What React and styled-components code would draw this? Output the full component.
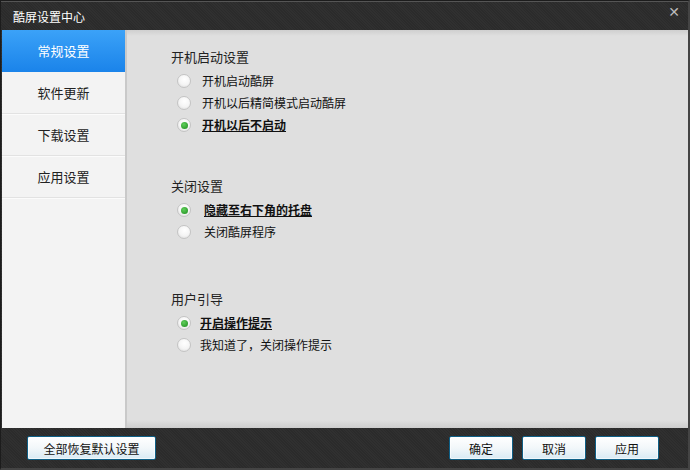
import React, { useState } from "react";
import styled, { createGlobalStyle } from "styled-components";

const Global = createGlobalStyle`
	html, body {
		margin: 0;
		padding: 0;
		background: #2a2a2a;
	}
	* {
		box-sizing: border-box;
	}
`;

const font = `"Noto Sans CJK SC", "Noto Sans", sans-serif`;

const Window = styled.div`
	width: 690px;
	height: 470px;
	display: flex;
	flex-direction: column;
	font-family: ${font};
	font-size: 12px;
	color: #222;
	background-color: #2b2b2b;
	background-image: repeating-linear-gradient(45deg, rgba(255, 255, 255, 0.025) 0 1px, transparent 1px 2px);
	border: 1px solid #1c1c1c;
	border-right: 2px solid #444;
	border-bottom: 2px solid #444;
`;

const TitleBar = styled.div`
	height: 29px;
	display: flex;
	align-items: center;
	justify-content: space-between;
	padding: 0 8px 0 12px;
	color: #fff;
	font-size: 12px;
	border-top: 1px solid #555;
`;

const Close = styled.span`
	color: #bbb;
	font-family: "DejaVu Sans", sans-serif;
	font-size: 14px;
	line-height: 1;
	margin-top: -8px;
`;

const Body = styled.div`
	flex: 1;
	display: flex;
	margin: 0 0 0 1px;
`;

const Sidebar = styled.div`
	width: 125px;
	background: #f3f3f3;
	border-right: 2px solid #c9c9c9;
	display: flex;
	flex-direction: column;
`;

const NavItem = styled.div`
	height: 42px;
	display: flex;
	align-items: center;
	justify-content: center;
	font-size: 13px;
	color: ${(p) => (p.$active ? "#fff" : "#222")};
	background: ${(p) => (p.$active ? "linear-gradient(180deg, #3ba2f8, #1b84ea)" : "transparent")};
	border-bottom: 1px solid ${(p) => (p.$active ? "#1b84ea" : "#e2e2e2")};
	box-shadow: ${(p) => (p.$active ? "none" : "0 1px 0 #fbfbfb")};
`;

const Content = styled.div`
	flex: 1;
	background: linear-gradient(180deg, #cfcfcf 0, #dfdfdf 6px, #dfdfdf calc(100% - 8px), #cdcdcd 100%);
	padding: 18px 0 0 44px;
	display: flex;
	flex-direction: column;
`;

const Section = styled.div`
	display: flex;
	flex-direction: column;
	margin-bottom: ${(p) => p.$gap}px;
`;

const SectionTitle = styled.div`
	font-size: 13px;
	height: 18px;
	line-height: 18px;
	margin-bottom: 4px;
`;

const Option = styled.label`
	display: flex;
	align-items: center;
	height: 22px;
	padding-left: 6px;
	cursor: pointer;
`;

const Dot = styled.span`
	width: 14px;
	height: 14px;
	border-radius: 50%;
	border: 1px solid #c4c4c4;
	background: radial-gradient(circle at 55% 35%, #ffffff 0, #f4f4f4 55%, #d6d6d6 100%);
	display: flex;
	align-items: center;
	justify-content: center;
	margin-right: ${(p) => p.$space}px;
	&::after {
		content: "";
		width: 7px;
		height: 7px;
		border-radius: 50%;
		background: ${(p) => (p.$on ? "radial-gradient(circle at 40% 35%, #5fcf5a, #1e8a1e)" : "transparent")};
	}
`;

const OptionText = styled.span`
	line-height: 16px;
	font-weight: ${(p) => (p.$on ? 700 : 400)};
	text-decoration: ${(p) => (p.$on ? "underline" : "none")};
	color: #111;
`;

const Footer = styled.div`
	height: 40px;
	display: flex;
	align-items: center;
	padding: 0 29px 0 26px;
	gap: 9px;
`;

const Button = styled.button`
	height: 24px;
	min-width: ${(p) => p.$w}px;
	padding: 0;
	font-family: ${font};
	font-size: 12px;
	color: #111;
	border: 1px solid #0e5f86;
	border-radius: 2px;
	background: linear-gradient(180deg, #ffffff 0, #f2f7fa 50%, #d8eaf4 100%);
	box-shadow: inset 0 0 0 1px rgba(255, 255, 255, 0.6);
	margin-left: ${(p) => (p.$push ? "auto" : "0")};
`;

const sections = [
	{
		title: "开机启动设置",
		gap: 41,
		space: 11,
		options: ["开机启动酷屏", "开机以后精简模式启动酷屏", "开机以后不启动"],
		def: 2,
	},
	{
		title: "关闭设置",
		gap: 47,
		space: 13,
		options: ["隐藏至右下角的托盘", "关闭酷屏程序"],
		def: 0,
	},
	{
		title: "用户引导",
		gap: 0,
		space: 9,
		options: ["开启操作提示", "我知道了，关闭操作提示"],
		def: 0,
	},
];

const nav = ["常规设置", "软件更新", "下载设置", "应用设置"];

export default function App() {
	const [picked, setPicked] = useState(sections.map((s) => s.def));

	return (
		<>
			<Global />
			<Window>
				<TitleBar>
					<span>酷屏设置中心</span>
					<Close>✕</Close>
				</TitleBar>
				<Body>
					<Sidebar>
						{nav.map((n, i) => (
							<NavItem key={n} $active={i === 0}>
								{n}
							</NavItem>
						))}
					</Sidebar>
					<Content>
						{sections.map((s, si) => (
							<Section key={s.title} $gap={s.gap}>
								<SectionTitle>{s.title}</SectionTitle>
								{s.options.map((o, oi) => {
									const on = picked[si] === oi;
									return (
										<Option
											key={o}
											onClick={() =>
												setPicked(picked.map((v, k) => (k === si ? oi : v)))
											}
										>
											<Dot $on={on} $space={s.space} />
											<OptionText $on={on}>{o}</OptionText>
										</Option>
									);
								})}
							</Section>
						))}
					</Content>
				</Body>
				<Footer>
					<Button $w={129}>全部恢复默认设置</Button>
					<Button $w={64} $push>
						确定
					</Button>
					<Button $w={64}>取消</Button>
					<Button $w={64}>应用</Button>
				</Footer>
			</Window>
		</>
	);
}
